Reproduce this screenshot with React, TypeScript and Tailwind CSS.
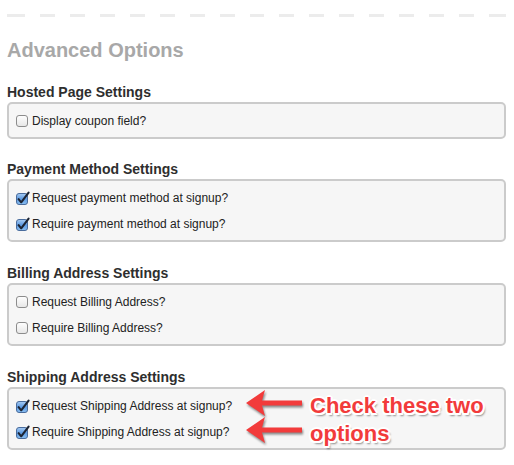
import React from "react";

const font = { fontFamily: '"Liberation Sans", Arial, Helvetica, sans-serif' };

function Unchecked() {
  return (
    <svg width="12" height="12" viewBox="0 0 12 12" className="shrink-0">
      <defs>
        <linearGradient id="ug" x1="0" y1="0" x2="0" y2="1">
          <stop offset="0" stopColor="#ffffff" />
          <stop offset="1" stopColor="#e6e6e6" />
        </linearGradient>
      </defs>
      <rect x="0.5" y="0.5" width="11" height="11" rx="2.5" fill="url(#ug)" stroke="#8c8c8c" />
    </svg>
  );
}

function Checked() {
  return (
    <svg width="15" height="13" viewBox="0 0 15 13" className="shrink-0 -mr-[3px]" style={{ overflow: "visible" }}>
      <defs>
        <linearGradient id="cg" x1="0" y1="0" x2="0" y2="1">
          <stop offset="0" stopColor="#a9cdf3" />
          <stop offset="0.5" stopColor="#5d9ae2" />
          <stop offset="1" stopColor="#8bc0f2" />
        </linearGradient>
      </defs>
      <rect x="0.5" y="1.5" width="11" height="11" rx="2.5" fill="url(#cg)" stroke="#4a6c9c" />
      <path d="M2.6 7.2 L5.2 10.3 L12.6 0.6" fill="none" stroke="#1c2433" strokeWidth="2.1" strokeLinecap="round" strokeLinejoin="round" />
    </svg>
  );
}

function Row({ label, checked }: { label: string; checked?: boolean }) {
  return (
    <div className="flex h-[26px] items-center gap-[4px] text-[12px] text-[#222]">
      {checked ? <Checked /> : <Unchecked />}
      <span>{label}</span>
    </div>
  );
}

function Section({
  title,
  rows,
  first,
}: {
  title: string;
  rows: { label: string; checked?: boolean }[];
  first?: boolean;
}) {
  return (
    <div className={first ? "mt-[22px]" : "mt-[23px]"}>
      <div className="h-[17px] text-[14px] font-bold leading-[17px] text-[#2e2e2e]">{title}</div>
      <div className="mt-[1px] rounded-[5px] border-2 border-[#cbcbcb] bg-[#f6f6f6] pb-[3px] pl-[7px] pt-[4px]">
        {rows.map((r) => (
          <Row key={r.label} label={r.label} checked={r.checked} />
        ))}
      </div>
    </div>
  );
}

function Arrow({ top }: { top: number }) {
  return (
    <svg
      width="62"
      height="30"
      viewBox="0 0 62 30"
      className="absolute left-[245px]"
      style={{ top, filter: "drop-shadow(1px 2px 1.2px rgba(0,0,0,0.45))" }}
    >
      <path
        d="M1 14 L20 1 L17 11.5 L57 11.5 L57 16.5 L17 16.5 L20 27 Z"
        fill="#f23b3b"
      />
    </svg>
  );
}

export default function App() {
  const dashes = Array.from({ length: 15 });
  return (
    <div className="relative h-[465px] w-[514px] overflow-hidden bg-white" style={font}>
      <div className="ml-[7px] w-[499px]">
        <div className="flex gap-[15px] pt-[14px]">
          <div className="h-[3px] w-[18px] bg-[#ececec]" />
          {dashes.map((_, i) => (
            <div key={i} className="h-[3px] w-[15px] bg-[#ececec]" />
          ))}
          <div className="h-[3px] w-[17px] bg-[#ececec]" />
        </div>
        <div className="mt-[21px] h-[24px] text-[20px] font-bold leading-[24px] text-[#a8a8a8]">
          Advanced Options
        </div>
        <Section
          first
          title="Hosted Page Settings"
          rows={[{ label: "Display coupon field?" }]}
        />
        <div className="mt-[-1px]" />
        <Section
          title="Payment Method Settings"
          rows={[
            { label: "Request payment method at signup?", checked: true },
            { label: "Require payment method at signup?", checked: true },
          ]}
        />
        <Section
          title="Billing Address Settings"
          rows={[{ label: "Request Billing Address?" }, { label: "Require Billing Address?" }]}
        />
        <Section
          title="Shipping Address Settings"
          rows={[
            { label: "Request Shipping Address at signup?", checked: true },
            { label: "Require Shipping Address at signup?", checked: true },
          ]}
        />
      </div>

      <Arrow top={389} />
      <Arrow top={416} />
      <div
        className="absolute left-[310px] top-[392px] text-[22px] font-bold leading-[28px] text-[#f23b3b]"
        style={{
          textShadow:
            "-2px 0 0 #fff, 2px 0 0 #fff, 0 -2px 0 #fff, 0 2px 0 #fff, -1.5px -1.5px 0 #fff, 1.5px -1.5px 0 #fff, -1.5px 1.5px 0 #fff, 1.5px 1.5px 0 #fff, 2px 3px 2px rgba(0,0,0,0.45)",
        }}
      >
        Check these two
        <br />
        options
      </div>
    </div>
  );
}
